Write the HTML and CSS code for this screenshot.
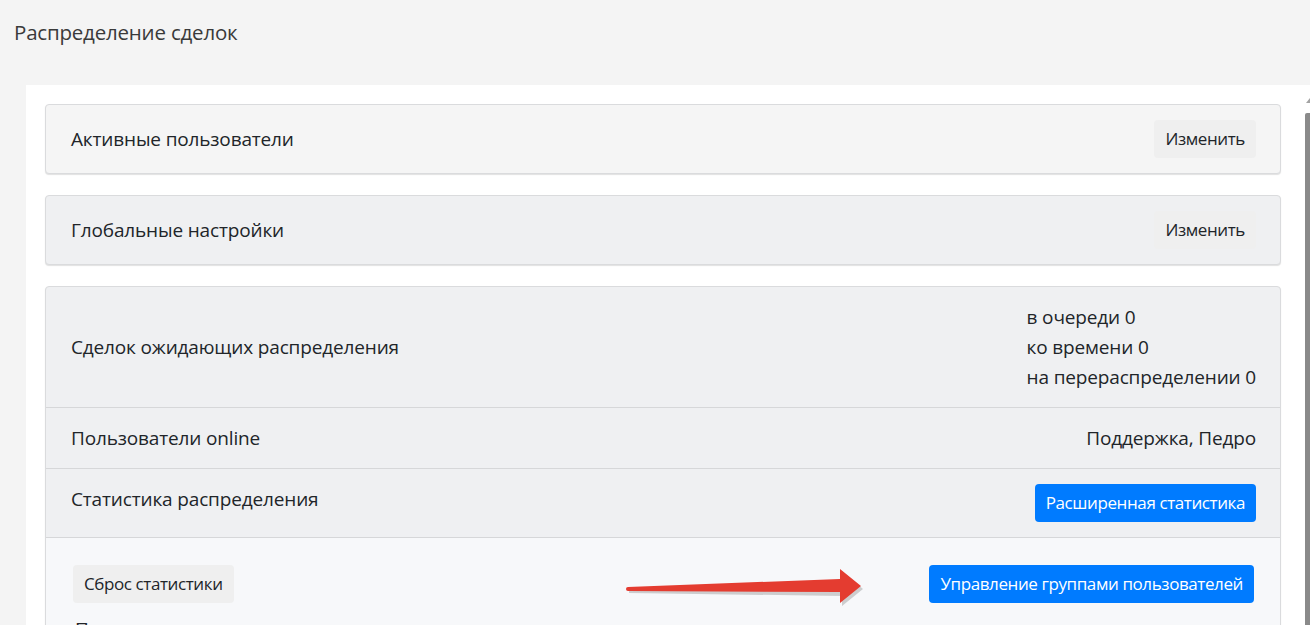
FILE: index.html
```
<!DOCTYPE html>
<html lang="ru">
<head>
    <meta charset="UTF-8">
    <meta name="viewport" content="width=device-width, initial-scale=1.0">
    <title>Распределение сделок</title>
    <link rel="stylesheet" href="styles.css">
</head>
<body>
    <h1 class="page-title">Распределение сделок</h1>
    <div class="panel">
        <div class="panel-body">
            <div class="card card-light">
                <div class="card-row">
                    <span class="label">Активные пользователи</span>
                    <button class="btn btn-light">Изменить</button>
                </div>
            </div>
            <div class="card">
                <div class="card-row">
                    <span class="label">Глобальные настройки</span>
                    <button class="btn btn-light">Изменить</button>
                </div>
            </div>
            <div class="card">
                <div class="card-row row-center">
                    <span class="label">Сделок ожидающих распределения</span>
                    <div class="counts">
                        <div>в очереди 0</div>
                        <div>ко времени 0</div>
                        <div>на перераспределении 0</div>
                    </div>
                </div>
                <div class="card-row">
                    <span class="label">Пользователи online</span>
                    <span class="label">Поддержка, Педро</span>
                </div>
                <div class="card-row row-top">
                    <span class="label">Статистика распределения</span>
                    <button class="btn btn-primary">Расширенная статистика</button>
                </div>
                <div class="card-footer">
                    <div class="footer-actions">
                        <button class="btn btn-light">Сброс статистики</button>
                        <button class="btn btn-primary">Управление группами пользователей</button>
                    </div>
                    <p class="footer-note">Период статистики: с начала</p>
                    <!-- annotation arrow -->
                    <svg class="arrow" width="260" height="55" viewBox="0 0 260 55">
                        <polygon points="13,31 226,24 226,13 247,31 226,48 226,38 13,35" fill="#9a9a9a" opacity="0.45"/>
                        <polygon points="12,29 224,21 224,11 245,28 224,45 224,34 12,33" fill="#e43c30"/>
                        <circle cx="12" cy="31" r="2" fill="#e43c30"/>
                    </svg>
                </div>
            </div>
        </div>
        <div class="scrollbar">
            <div class="scroll-arrow"></div>
            <div class="scroll-thumb"></div>
        </div>
    </div>
</body>
</html>
```

FILE: styles.css
```
/* General Styling */
body {
    background-color: #f4f4f4;
    color: #212529;
    font-family: 'Open Sans', 'Noto Sans', sans-serif;
    margin: 0;
    padding: 0;
    overflow: hidden;
    height: 625px;
}

.page-title {
    font-size: 20.5px;
    font-weight: 400;
    color: #3a3a3a;
    margin: 0;
    padding: 18px 0 0 14px;
    height: 85px;
    box-sizing: border-box;
    letter-spacing: -0.2px;
}

.panel {
    display: flex;
    background-color: #ffffff;
    margin-left: 26px;
    width: 1292px;
    height: 540px;
}

.panel-body {
    flex: 1;
    padding: 19px 20px 0 19px;
    display: flex;
    flex-direction: column;
    gap: 21px;
}

.card {
    background-color: #eff0f2;
    border: 1px solid #dadbdd;
    border-radius: 4px;
    box-shadow: 0 1px 1px rgba(0, 0, 0, 0.12);
    position: relative;
}

.card-light {
    background-color: #f5f5f5;
}

.card-row {
    display: flex;
    justify-content: space-between;
    align-items: center;
    padding: 15px 24px 15px 25px;
    border-bottom: 1px solid #d6d7d9;
}

.card > .card-row:last-child {
    border-bottom: none;
}

.row-top {
    align-items: flex-start;
}

.label {
    font-size: 19px;
    line-height: 30px;
    letter-spacing: -0.15px;
    white-space: nowrap;
}

.counts {
    font-size: 19px;
    line-height: 30px;
    letter-spacing: -0.15px;
    white-space: nowrap;
}

.btn {
    font-family: 'Open Sans', 'Noto Sans', sans-serif;
    font-size: 17px;
    line-height: 24px;
    padding: 7px 11px;
    border: none;
    border-radius: 4px;
    cursor: pointer;
    letter-spacing: -0.4px;
    white-space: nowrap;
}

.btn-light {
    background-color: #efefef;
    color: #212529;
}

.btn-primary {
    background-color: #007bff;
    color: #ffffff;
}

.card-footer {
    background-color: #f7f8fa;
    padding: 27px 26px 0 27px;
    position: relative;
    height: 120px;
    border-radius: 0 0 4px 4px;
}

.footer-actions {
    display: flex;
    justify-content: space-between;
    align-items: center;
}

.footer-note {
    font-size: 19px;
    line-height: 30px;
    margin: 11px 0 0 2px;
}

.arrow {
    position: absolute;
    left: 570px;
    top: 20px;
}

.scrollbar {
    width: 17px;
    display: flex;
    flex-direction: column;
    align-items: center;
    padding-top: 13px;
    background-color: #ffffff;
}

.scroll-arrow {
    width: 0;
    height: 0;
    border-left: 4px solid transparent;
    border-right: 4px solid transparent;
    border-bottom: 5px solid #a3a3a3;
    margin-bottom: 10px;
}

.scroll-thumb {
    width: 9px;
    flex: 1;
    background-color: #8a8a8a;
    border-radius: 2px 2px 0 0;
}
```
